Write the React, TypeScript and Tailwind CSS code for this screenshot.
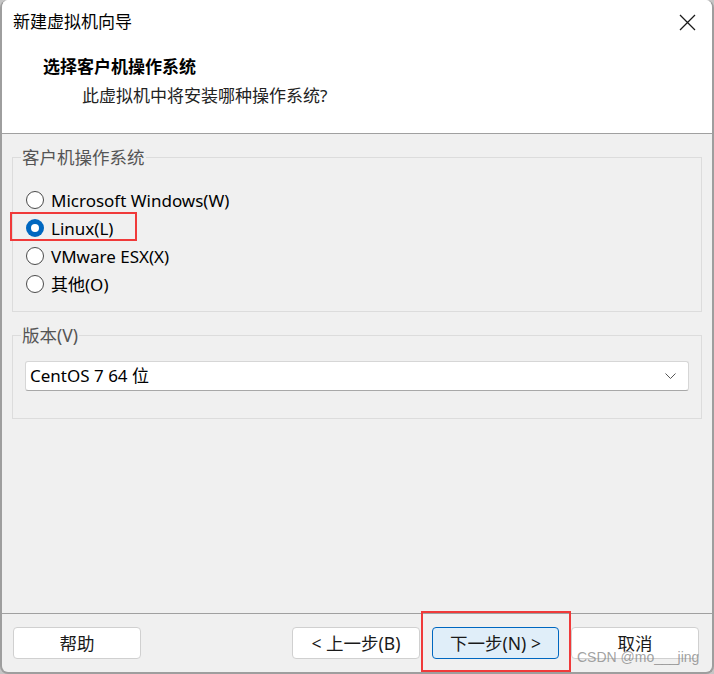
import React from "react";

const font = "font-['Noto_Sans','Noto_Sans_CJK_SC',sans-serif]";

const Radio = ({ label, checked }: { label: string; checked?: boolean }) => (
  <div className="flex items-center h-[28px]">
    {checked ? (
      <span className="w-[18px] h-[18px] rounded-full bg-[#0067c0] flex items-center justify-center">
        <span className="w-[8px] h-[8px] rounded-full bg-white" />
      </span>
    ) : (
      <span className="w-[18px] h-[18px] rounded-full border border-[#4a4a4a] bg-white" />
    )}
    <span className="ml-[7px] text-[17px] leading-none text-black">{label}</span>
  </div>
);

const Button = ({ children, primary }: { children: React.ReactNode; primary?: boolean }) => (
  <button
    className={
      primary
        ? "w-[127px] h-[32px] rounded-[4px] border border-[#0067c0] bg-[#e0eef9] text-[17.5px] text-[#1a1a1a]"
        : "w-[128px] h-[32px] rounded-[4px] border border-[#d0d0d0] bg-white text-[17.5px] text-[#1a1a1a]"
    }
  >
    {children}
  </button>
);

export default function App() {
  return (
    <div className={`w-[714px] h-[674px] bg-[#c6c6c6] ${font}`}>
      <div className="relative h-full flex flex-col rounded-[8px] border-x-2 border-b-2 border-[#9e9e9e] bg-[#f0f0f0] overflow-hidden">
        {/* header */}
        <div className="h-[134px] bg-white border-b border-[#a0a0a0] shrink-0">
          <div className="flex items-center justify-between h-[44px] pl-[11px] pr-[16px]">
            <span className="text-[17px] text-black">新建虚拟机向导</span>
            <svg width="17" height="17" viewBox="0 0 17 17">
              <path d="M1 1 L16 16 M16 1 L1 16" stroke="#1a1a1a" strokeWidth="1.3" />
            </svg>
          </div>
          <div className="pl-[41px] pt-[11px] text-[17px] font-bold text-black leading-[24px]">选择客户机操作系统</div>
          <div className="pl-[80px] pt-[5px] text-[17px] text-[#222] leading-[24px]">此虚拟机中将安装哪种操作系统?</div>
        </div>

        {/* body */}
        <div className="px-[10px] pt-[13px]">
          <fieldset className="border border-[#dcdcdc] h-[165px]">
            <legend className="ml-[8px] px-[1px] text-[17.5px] text-[#555] leading-[20px]">客户机操作系统</legend>
            <div className="pt-[19px] pl-[13px]">
              <Radio label="Microsoft Windows(W)" />
              <Radio label="Linux(L)" checked />
              <Radio label="VMware ESX(X)" />
              <Radio label="其他(O)" />
            </div>
          </fieldset>

          <fieldset className="mt-[13px] border border-[#dcdcdc] h-[94px]">
            <legend className="ml-[8px] px-[1px] text-[17.5px] text-[#555] leading-[20px]">版本(V)</legend>
            <div className="mx-[12px] mt-[16px] h-[30px] flex items-center justify-between rounded-[3px] border border-[#d6d6d6] border-b-[#a8a8a8] bg-white pl-[4px] pr-[12px]">
              <span className="text-[17px] text-black">CentOS 7 64 位</span>
              <svg width="11" height="7" viewBox="0 0 11 7">
                <path d="M0.5 0.5 L5.5 5.5 L10.5 0.5" stroke="#555" strokeWidth="1" fill="none" />
              </svg>
            </div>
          </fieldset>
        </div>

        <div className="flex-1" />

        {/* footer */}
        <div className="h-[59px] shrink-0 border-t border-[#a0a0a0] flex items-start pt-[13px] pl-[11px] pr-[13px]">
          <Button>帮助</Button>
          <div className="flex-1" />
          <div className="flex gap-[12px]">
            <Button>&lt; 上一步(B)</Button>
            <Button primary>下一步(N) &gt;</Button>
            <Button>取消</Button>
          </div>
        </div>

        {/* annotation overlays */}
        <div className="absolute left-[8px] top-[212px] w-[127px] h-[29px] border-2 border-[#f03a3a]" />
        <div className="absolute left-[419px] top-[611px] w-[150px] h-[61px] border-2 border-[#f03a3a]" />
        <div className="absolute left-[575px] top-[647px] text-[14px] text-[#8a8a8a]/80 leading-[20px] font-['Liberation_Sans',sans-serif]">
          CSDN @mo___jing
        </div>
      </div>
    </div>
  );
}
